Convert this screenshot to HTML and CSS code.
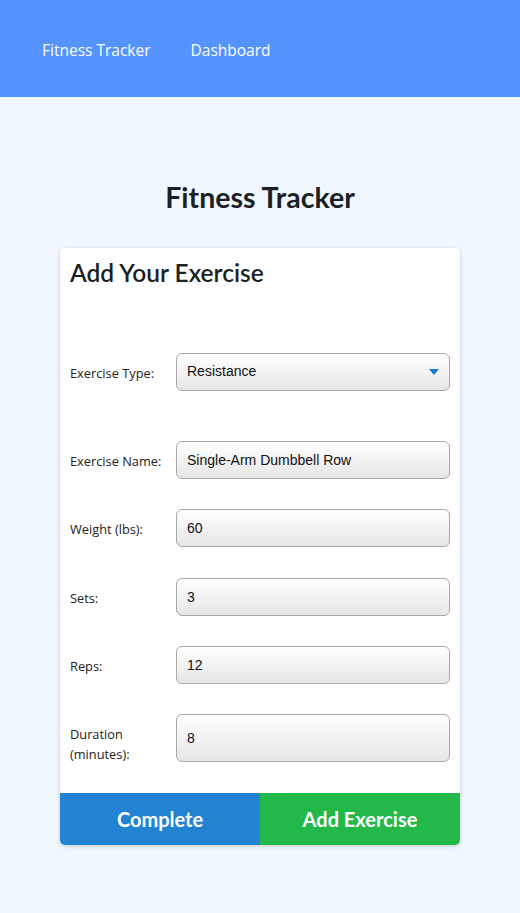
FILE: index.html
```html
<!DOCTYPE html>
<html>
<head>
<meta charset="utf-8">
<link rel="stylesheet" href="styles.css">
</head>
<body>
<header class="topbar">
  <nav class="nav">
    <a class="nav-link">Fitness Tracker</a>
    <a class="nav-link">Dashboard</a>
  </nav>
</header>
<main class="main">
  <h1 class="page-title">Fitness Tracker</h1>
  <section class="card">
    <h2 class="card-title">Add Your Exercise</h2>
    <form class="form">
      <div class="row row-type">
        <label class="label">Exercise Type:</label>
        <div class="field select">
          <span>Resistance</span>
          <svg class="caret" width="10" height="6" viewBox="0 0 10 6"><path d="M0 0h10L5 6z" fill="#1478c8"/></svg>
        </div>
      </div>
      <div class="row">
        <label class="label">Exercise Name:</label>
        <div class="field">Single-Arm Dumbbell Row</div>
      </div>
      <div class="row">
        <label class="label">Weight (lbs):</label>
        <div class="field">60</div>
      </div>
      <div class="row">
        <label class="label">Sets:</label>
        <div class="field">3</div>
      </div>
      <div class="row">
        <label class="label">Reps:</label>
        <div class="field">12</div>
      </div>
      <div class="row">
        <label class="label label-wrap">Duration (minutes):</label>
        <div class="field field-tall">8</div>
      </div>
    </form>
    <div class="actions">
      <button class="btn btn-complete">Complete</button>
      <button class="btn btn-add">Add Exercise</button>
    </div>
  </section>
</main>
</body>
</html>
```
FILE: styles.css
```css
* { box-sizing: border-box; }
html, body { margin: 0; padding: 0; }
body {
  background: #f0f7ff;
  font-family: "Open Sans", sans-serif;
  width: 520px;
  height: 913px;
  overflow: hidden;
}
.topbar {
  background: #5593fe;
  height: 97px;
  display: flex;
  align-items: center;
  padding-top: 3px;
}
.nav {
  display: flex;
  gap: 40px;
  padding-left: 42px;
}
.nav-link {
  color: #ffffff;
  font-family: "Open Sans", sans-serif;
  font-size: 15.5px;
  line-height: 22px;
}
.main {
  display: flex;
  flex-direction: column;
  align-items: center;
  padding-top: 83px;
}
.page-title {
  font-family: Lato, sans-serif;
  font-weight: 700;
  font-size: 28.5px;
  line-height: 34px;
  color: #1c1f26;
  margin: 0 0 34px 0;
}
.card {
  width: 400px;
  background: #ffffff;
  border-radius: 5px;
  box-shadow: 0 1px 4px rgba(0,0,0,0.18);
  overflow: hidden;
}
.card-title {
  font-family: Lato, sans-serif;
  font-weight: 600;
  font-size: 24.5px;
  line-height: 30px;
  color: #1c1f26;
  margin: 0;
  padding: 10px 10px 0 10px;
}
.form {
  display: flex;
  flex-direction: column;
  gap: 30px;
  padding: 65px 10px 31px 10px;
}
.row {
  display: flex;
  align-items: center;
}
.row-type { margin-bottom: 20px; }
.row:nth-child(3) { margin-bottom: 1px; }
.label {
  width: 106px;
  flex: none;
  font-family: "Open Sans", sans-serif;
  font-size: 12.8px;
  line-height: 20px;
  color: #222;
  padding-right: 6px;
  padding-top: 2px;
}
.label-wrap { padding-top: 10px; margin-bottom: -2px; }
.field {
  flex: 1;
  height: 38px;
  border: 1px solid #a9a9a9;
  border-radius: 6px;
  background: linear-gradient(#ffffff, #e6e6e6);
  font-family: "Liberation Sans", Arial, sans-serif;
  font-size: 14px;
  color: #111;
  display: flex;
  align-items: center;
  padding: 0 10px;
}
.field-tall { height: 48px; }
.select { justify-content: space-between; padding-right: 10px; }
.select span { position: relative; top: -1px; }
.caret { display: block; }
.actions {
  display: flex;
}
.btn {
  flex: 1;
  height: 52px;
  border: none;
  margin: 0;
  color: #ffffff;
  font-family: Lato, sans-serif;
  font-weight: 700;
  font-size: 20px;
  cursor: pointer;
}
.btn-complete { background: #2283d2; }
.btn-add { background: #22b94a; }
```
